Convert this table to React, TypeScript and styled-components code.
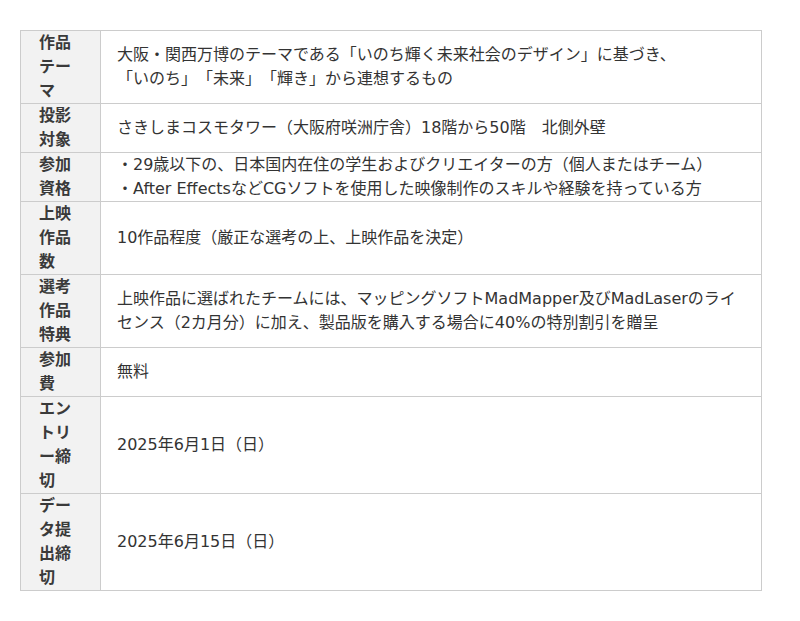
import React from 'react';
import styled, { createGlobalStyle } from 'styled-components';

const GlobalStyle = createGlobalStyle`
  body {
    margin: 0;
    background: #fff;
    font-family: "DejaVu Sans", "Noto Sans CJK JP", sans-serif;
    text-spacing-trim: space-all;
  }
`;

const Page = styled.div`
  padding: 30px 20px 20px;
`;

const InfoTable = styled.table`
  width: 742px;
  border-collapse: collapse;
  table-layout: fixed;
  font-size: 16px;
  line-height: 24px;
  color: #333;
  text-spacing-trim: space-all;
`;

const HeadCell = styled.th`
  width: 80px;
  box-sizing: border-box;
  padding: 0 18px;
  background: #f2f2f2;
  border: 1px solid #ccc;
  text-align: left;
  font-weight: bold;
  color: #3a3a3a;
  vertical-align: middle;
`;

const BodyCell = styled.td`
  padding: 0 16px;
  border: 1px solid #ccc;
  vertical-align: middle;
`;

const rows: { label: string; lines: string[] }[] = [
  {
    label: '作品テーマ',
    lines: [
      '大阪・関西万博のテーマである「いのち輝く未来社会のデザイン」に基づき、',
      '「いのち」「未来」「輝き」から連想するもの',
    ],
  },
  {
    label: '投影対象',
    lines: ['さきしまコスモタワー（大阪府咲洲庁舎）18階から50階　北側外壁'],
  },
  {
    label: '参加資格',
    lines: [
      '・29歳以下の、日本国内在住の学生およびクリエイターの方（個人またはチーム）',
      '・After EffectsなどCGソフトを使用した映像制作のスキルや経験を持っている方',
    ],
  },
  { label: '上映作品数', lines: ['10作品程度（厳正な選考の上、上映作品を決定）'] },
  {
    label: '選考作品特典',
    lines: [
      '上映作品に選ばれたチームには、マッピングソフトMadMapper及びMadLaserのライセンス（2カ月分）に加え、製品版を購入する場合に40%の特別割引を贈呈',
    ],
  },
  { label: '参加費', lines: ['無料'] },
  { label: 'エントリー締切', lines: ['2025年6月1日（日）'] },
  { label: 'データ提出締切', lines: ['2025年6月15日（日）'] },
];

const App: React.FC = () => (
  <Page>
    <GlobalStyle />
    <InfoTable>
      <tbody>
        {rows.map(row => (
          <tr key={row.label}>
            <HeadCell>{row.label}</HeadCell>
            <BodyCell>
              {row.lines.map((line, i) => (
                <React.Fragment key={i}>
                  {i > 0 && <br />}
                  {line}
                </React.Fragment>
              ))}
            </BodyCell>
          </tr>
        ))}
      </tbody>
    </InfoTable>
  </Page>
);

export default App;
